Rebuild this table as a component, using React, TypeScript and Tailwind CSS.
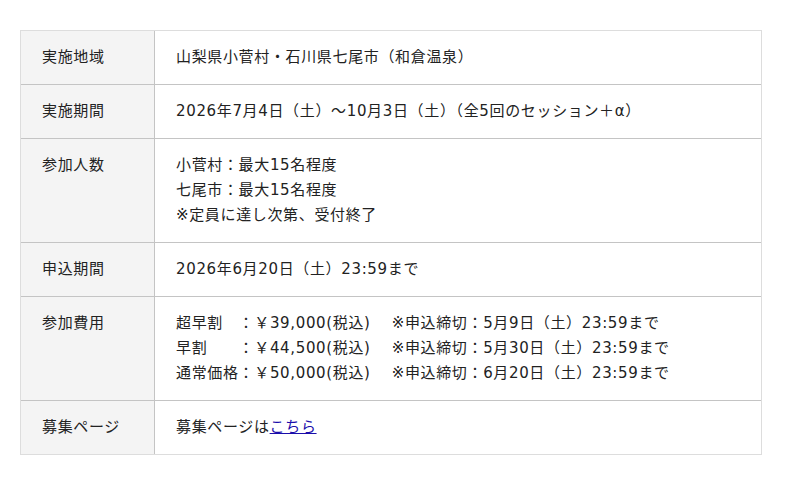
import React from "react";

type Row = { label: string; body: React.ReactNode };

const rows: Row[] = [
  { label: "実施地域", body: "山梨県小菅村・石川県七尾市（和倉温泉）" },
  { label: "実施期間", body: "2026年7月4日（土）～10月3日（土）（全5回のセッション＋α）" },
  {
    label: "参加人数",
    body: (
      <>
        <p>小菅村：最大15名程度</p>
        <p>七尾市：最大15名程度</p>
        <p>※定員に達し次第、受付終了</p>
      </>
    ),
  },
  { label: "申込期間", body: "2026年6月20日（土）23:59まで" },
  {
    label: "参加費用",
    body: (
      <div className="whitespace-pre">
        <p>超早割　：￥39,000(税込)　 ※申込締切：5月9日（土）23:59まで</p>
        <p>早割　　：￥44,500(税込)　 ※申込締切：5月30日（土）23:59まで</p>
        <p>通常価格：￥50,000(税込)　 ※申込締切：6月20日（土）23:59まで</p>
      </div>
    ),
  },
  {
    label: "募集ページ",
    body: (
      <>
        募集ページは<a href="#" className="text-[#1a0dab] underline">こちら</a>
      </>
    ),
  },
];

export default function App() {
  return (
    <div className="bg-white w-[800px] h-[485px] pt-[30px] px-[20px] [font-family:'DejaVu_Sans','Noto_Sans_CJK_JP',sans-serif] text-[15px] tracking-[0.65px] leading-[25px] text-[#222]">
      <div className="w-[742px] border border-[#dddddd]">
        {rows.map((row, i) => (
          <div
            key={i}
            className={`flex ${i > 0 ? "border-t border-[#c4c4c4]" : ""}`}
          >
            <div className="w-[134px] shrink-0 bg-[#f4f4f4] border-r border-[#c4c4c4] px-[21px] py-[14px]">
              {row.label}
            </div>
            <div className="flex-1 px-[21px] py-[14px]">{row.body}</div>
          </div>
        ))}
      </div>
    </div>
  );
}
